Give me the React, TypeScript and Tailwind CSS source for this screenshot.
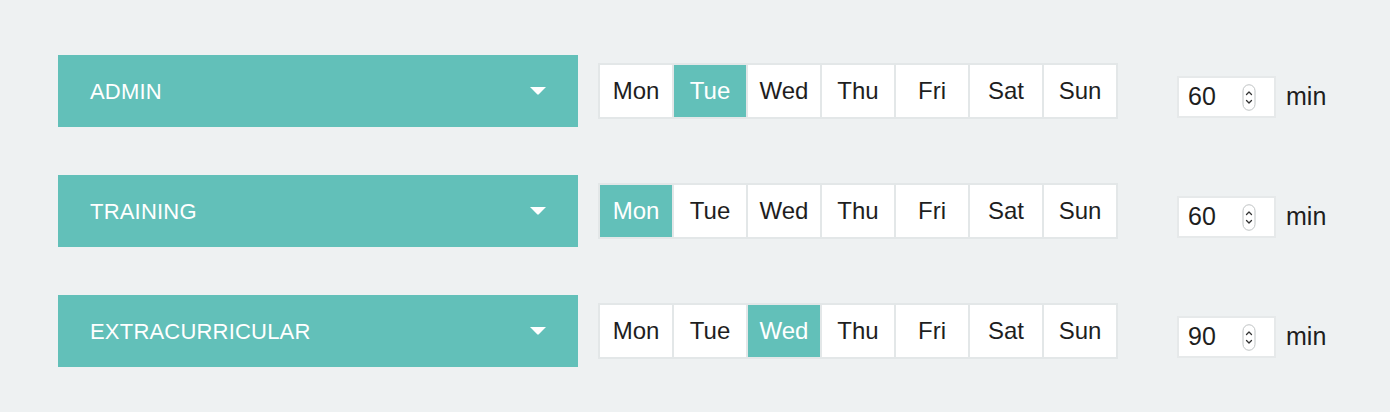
import React from 'react';

const DAYS = ['Mon', 'Tue', 'Wed', 'Thu', 'Fri', 'Sat', 'Sun'];

const rows = [
  { label: 'ADMIN', day: 'Tue', minutes: 60 },
  { label: 'TRAINING', day: 'Mon', minutes: 60 },
  { label: 'EXTRACURRICULAR', day: 'Wed', minutes: 90 },
];

const Spinner: React.FC = () => (
  <svg width="14" height="27" viewBox="0 0 14 27" fill="none">
    <rect x="1" y="0.75" width="12" height="25.5" rx="6" fill="#fff" stroke="#bfc3c4" strokeWidth="1" />
    <path d="M4.5 10.5L7 8L9.5 10.5" stroke="#333" strokeWidth="1.3" strokeLinecap="round" strokeLinejoin="round" />
    <path d="M4.5 16.5L7 19L9.5 16.5" stroke="#333" strokeWidth="1.3" strokeLinecap="round" strokeLinejoin="round" />
  </svg>
);

const App: React.FC = () => {
  return (
    <div
      className="min-h-[412px] w-[1390px] bg-[#eef1f2] pl-[58px] pt-[55px]"
      style={{ fontFamily: '"Liberation Sans", Arial, sans-serif' }}
    >
      <div className="flex flex-col gap-[48px]">
        {rows.map((row) => (
          <div key={row.label} className="flex items-start">
            {/* Category dropdown */}
            <div className="flex h-[72px] w-[520px] items-center justify-between bg-[#62c0b9] pl-[32px] pr-[32px]">
              <span className="text-[22px] tracking-[0.2px] text-white">{row.label}</span>
              <svg width="16" height="8" viewBox="0 0 16 8">
                <path d="M0 0H16L8.8 7.3Q8 8 7.2 7.3Z" fill="#fff" />
              </svg>
            </div>

            {/* Day picker */}
            <div className="ml-[20px] mt-[8px] flex gap-[2px] bg-[#e3e7e8] p-[2px]">
              {DAYS.map((d) => (
                <div
                  key={d}
                  className={
                    d === row.day
                      ? 'flex h-[52px] w-[72px] items-center justify-center bg-[#62c0b9] text-[24px] text-white'
                      : 'flex h-[52px] w-[72px] items-center justify-center bg-white text-[24px] text-[#1e1e1e]'
                  }
                >
                  {d}
                </div>
              ))}
            </div>

            {/* Minutes input */}
            <div className="ml-[59px] mt-[21px] flex items-center">
              <div className="flex h-[42px] w-[99px] items-center border-2 border-[#e6e9ea] bg-white pl-[9px]">
                <span className="w-[54px] text-[25px] text-[#1e1e1e]">{row.minutes}</span>
                <Spinner />
              </div>
              <span className="ml-[10px] text-[25px] text-[#1e1e1e]">min</span>
            </div>
          </div>
        ))}
      </div>
    </div>
  );
};

export default App;
